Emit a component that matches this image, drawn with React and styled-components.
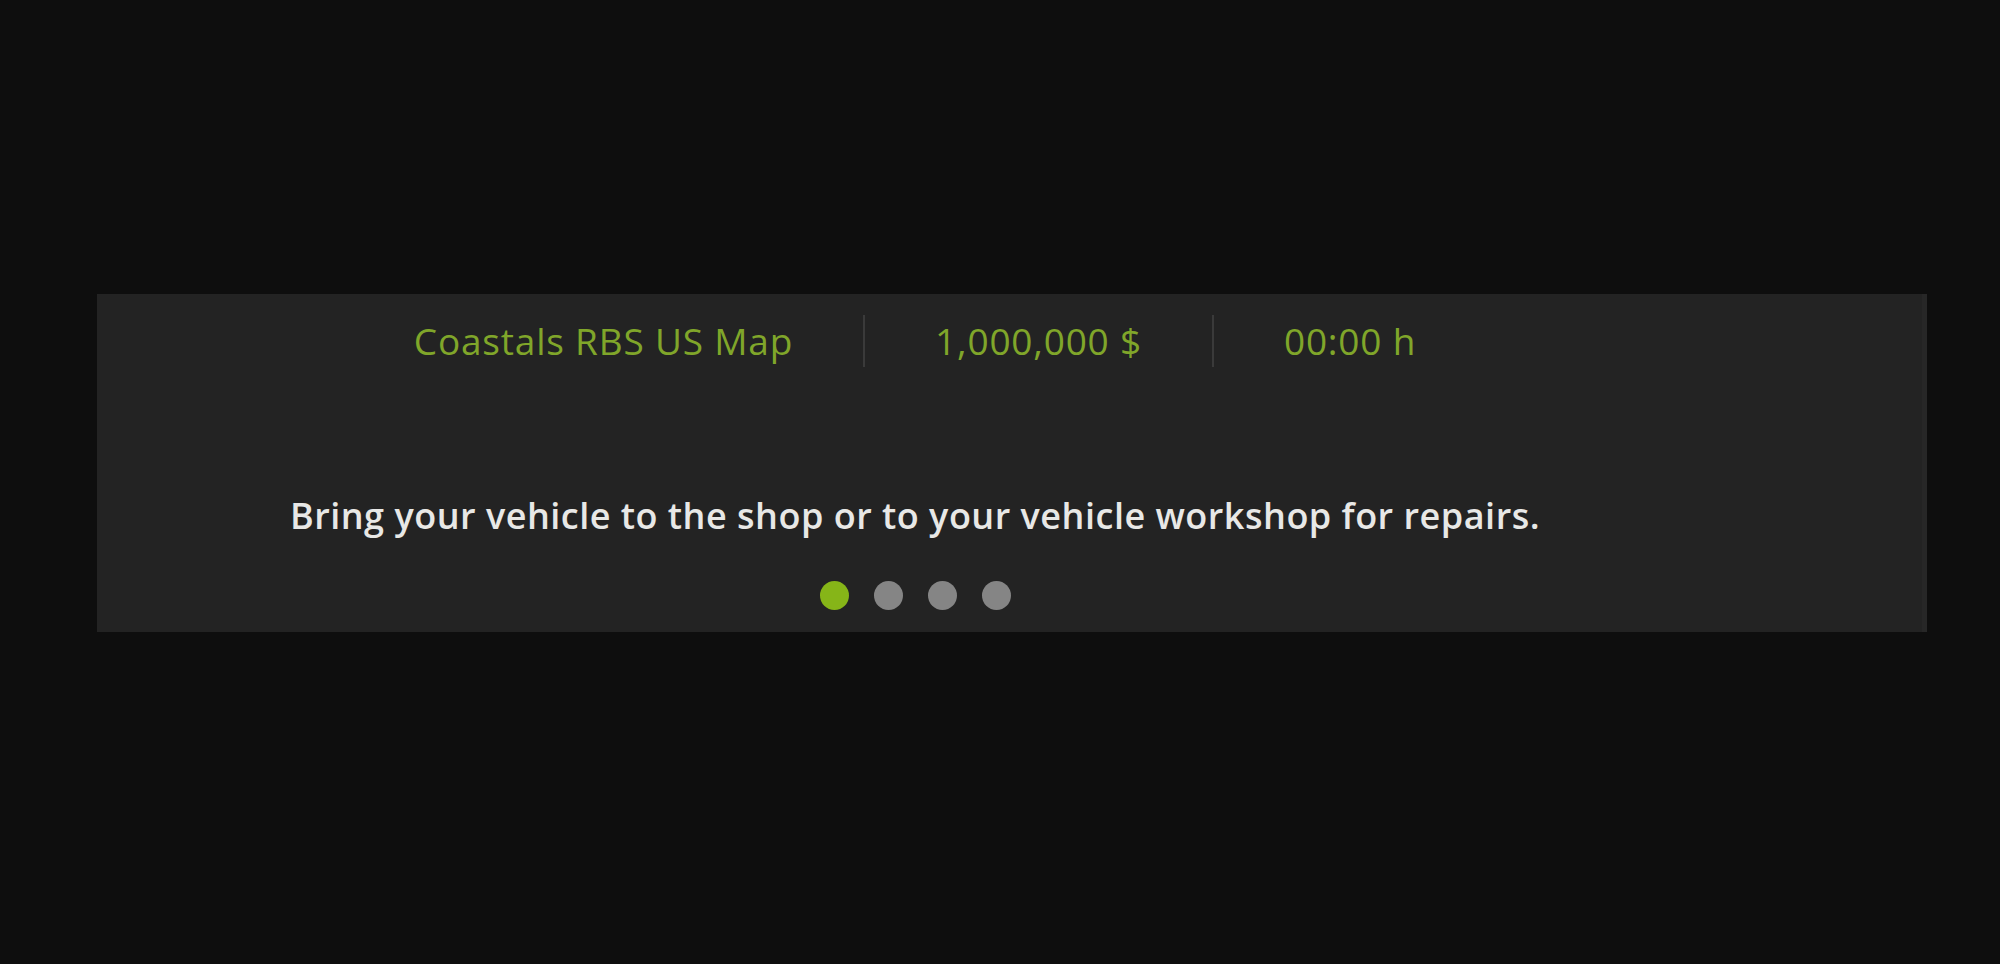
import React, { useState } from "react";
import styled, { createGlobalStyle } from "styled-components";

const Global = createGlobalStyle`
  html, body {
    margin: 0;
    padding: 0;
    background: #0e0e0e;
  }
  body {
    font-family: "Open Sans", "Noto Sans", sans-serif;
  }
`;

const Page = styled.div`
  min-height: 964px;
  box-sizing: border-box;
  padding: 294px 73px 0 97px;
`;

const Panel = styled.section`
  height: 338px;
  box-sizing: border-box;
  background: #232323;
  border-right: 5px solid #272727;
  padding: 21px 189px 0 0;
  display: flex;
  flex-direction: column;
  align-items: center;
`;

const InfoBar = styled.div`
  display: flex;
  align-items: center;
  height: 52px;
`;

const Stat = styled.span`
  color: #80a62a;
  font-size: 37px;
  letter-spacing: 0.8px;
  line-height: 52px;
  white-space: nowrap;
`;

const Divider = styled.span`
  width: 2px;
  height: 52px;
  background: #3a3a3a;
  margin: 0 70px;
`;

const Hint = styled.p`
  margin: 129px 0 0;
  color: #e8e8e6;
  font-size: 36px;
  font-weight: 600;
  letter-spacing: 0.5px;
  line-height: 40px;
  white-space: nowrap;
`;

const Dots = styled.div`
  display: flex;
  gap: 25px;
  margin-top: 45px;
`;

const Dot = styled.button`
  width: 29px;
  height: 29px;
  padding: 0;
  border: none;
  border-radius: 50%;
  background: ${p => (p.$active ? "#86b518" : "#858585")};
  cursor: pointer;
`;

const hints = [
  "Bring your vehicle to the shop or to your vehicle workshop for repairs.",
  "Complete deliveries on time to earn bonus money.",
  "Rest regularly to avoid fatigue while driving.",
  "Upgrade your truck at the dealer to carry heavier loads."
];

export default function App() {
  const [page, setPage] = useState(0);

  return (
    <>
      <Global />
      <Page>
        <Panel>
          <InfoBar>
            <Stat>Coastals RBS US Map</Stat>
            <Divider />
            <Stat>1,000,000 $</Stat>
            <Divider />
            <Stat>00:00 h</Stat>
          </InfoBar>
          <Hint>{hints[page]}</Hint>
          <Dots>
            {hints.map((h, i) => (
              <Dot key={i} $active={i === page} onClick={() => setPage(i)} />
            ))}
          </Dots>
        </Panel>
      </Page>
    </>
  );
}
